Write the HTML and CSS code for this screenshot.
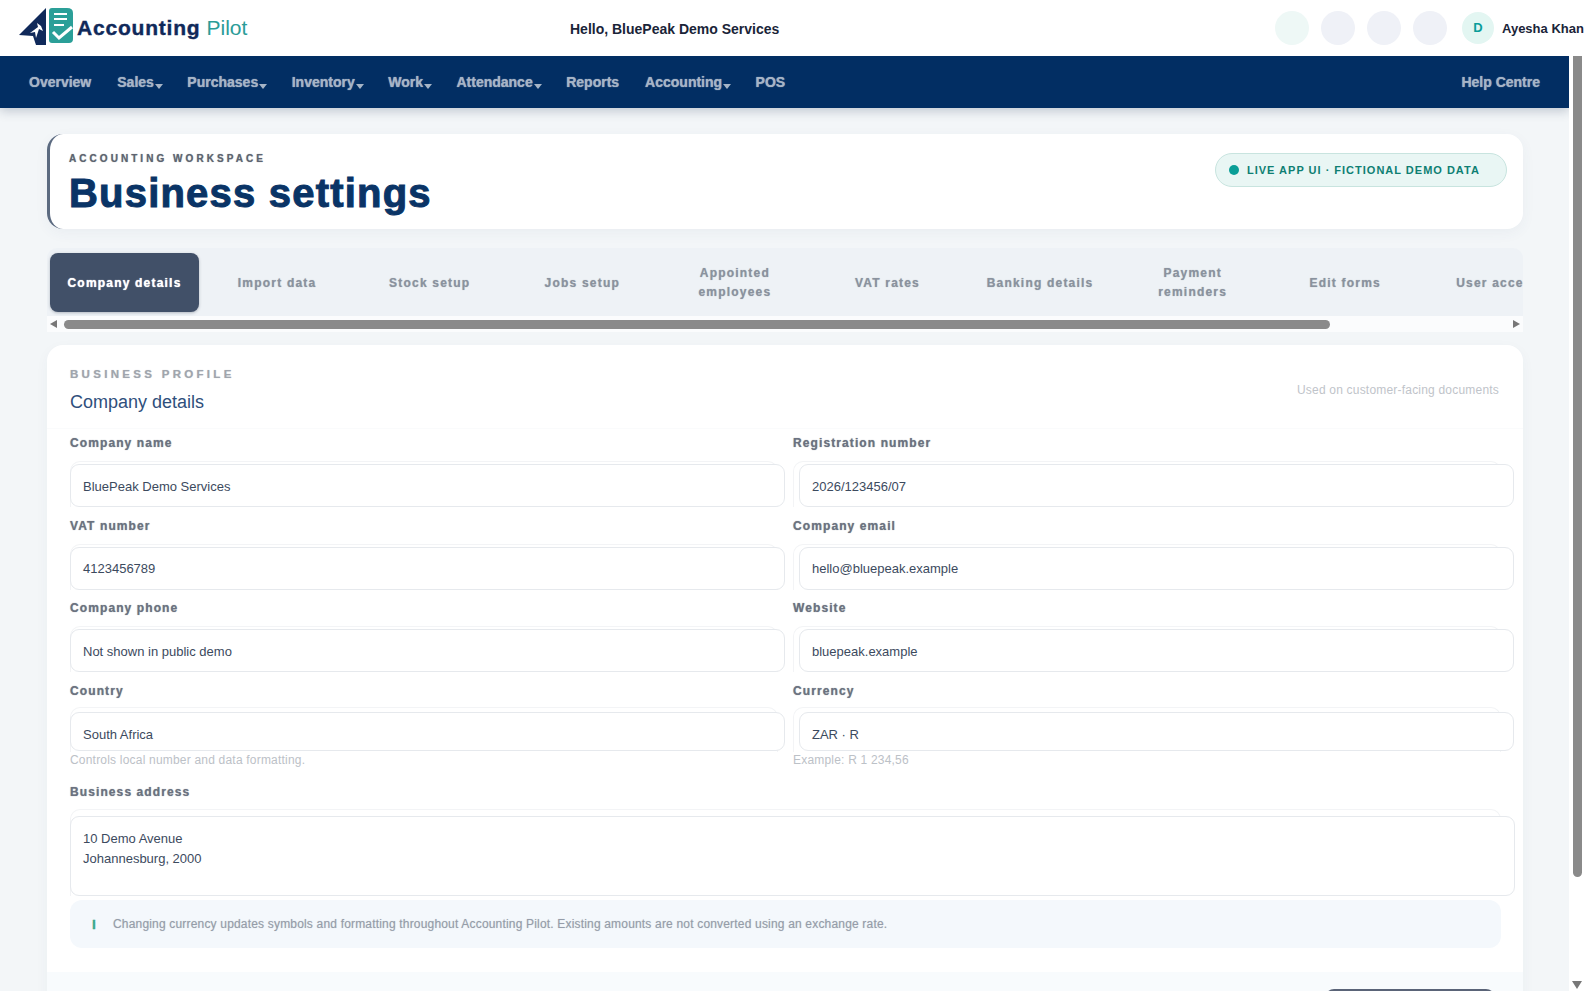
FILE: index.html
```html
<!DOCTYPE html>
<html lang="en">
	<head>
		<title>Business settings</title>
		<meta charset="UTF-8">
		<meta content="width=device-width,initial-scale=1.0" name="viewport">
		<link rel="stylesheet" href="styles.css">
	</head>
	<body>
		<div class="app">
			<header class="topbar">
				<div class="brand">
					<svg class="brandMark" width="54" height="38" viewBox="0 0 54 38">
						<path d="M27 0 L27 37 L17 37 L14 28 L0 27 Z" fill="#10295a"/>
						<path d="M11 25 L19 19 L18 15 L22 18 L24 23 L20 21 L17 30 L16 24 Z" fill="#fff"/>
						<path d="M30 3 Q30 0 33 0 L48 0 Q54 0 54 5 L54 31 Q54 35 50 35 L33 35 Q30 35 30 32 Z" fill="#2b9f98"/>
						<path d="M35 6 H48 M35 11 H48 M35 17 H45" stroke="#fff" stroke-width="2" fill="none"/>
						<path d="M34 24 L40 30 L53 19" stroke="#fff" stroke-width="3" fill="none"/>
					</svg>
					<span class="brandName">Accounting</span><span class="brandPilot">Pilot</span>
				</div>
				<div class="hello">Hello, BluePeak Demo Services</div>
				<div class="topIcons">
					<span class="roundBtn mint"></span>
					<span class="roundBtn"></span>
					<span class="roundBtn"></span>
					<span class="roundBtn"></span>
					<span class="avatar">D</span>
					<span class="userName">Ayesha Khan</span>
				</div>
			</header>
			<div class="workArea">
				<div class="scroller">
					<nav class="mainNav">
						<a class="navItem">Overview</a>
						<a class="navItem drop">Sales</a>
						<a class="navItem drop">Purchases</a>
						<a class="navItem drop">Inventory</a>
						<a class="navItem drop">Work</a>
						<a class="navItem drop">Attendance</a>
						<a class="navItem">Reports</a>
						<a class="navItem drop">Accounting</a>
						<a class="navItem">POS</a>
						<a class="navItem help">Help Centre</a>
					</nav>
					<main class="page">
						<section class="hero">
							<div>
								<div class="eyebrow">ACCOUNTING WORKSPACE</div>
								<h1 class="pageTitle">Business settings</h1>
							</div>
							<div class="liveBadge"><span class="liveDot"></span>LIVE APP UI · FICTIONAL DEMO DATA</div>
						</section>
						<div class="tabsWrap">
							<div class="tabs">
								<a class="tab active">Company details</a>
								<a class="tab">Import data</a>
								<a class="tab">Stock setup</a>
								<a class="tab">Jobs setup</a>
								<a class="tab">Appointed employees</a>
								<a class="tab">VAT rates</a>
								<a class="tab">Banking details</a>
								<a class="tab">Payment reminders</a>
								<a class="tab">Edit forms</a>
								<a class="tab">User access</a>
							</div>
							<div class="tabsBar">
								<span class="arrowLeft"></span>
								<span class="tabsThumb"></span>
								<span class="arrowRight"></span>
							</div>
						</div>
						<section class="card">
							<div class="cardHead">
								<div>
									<div class="cardEyebrow">BUSINESS PROFILE</div>
									<h2 class="cardTitle">Company details</h2>
								</div>
								<div class="cardNote">Used on customer-facing documents</div>
							</div>
							<div class="formGrid">
								<div class="field">
									<label class="fieldLabel">Company name</label>
									<div class="ghost"><div class="input">BluePeak Demo Services</div></div>
								</div>
								<div class="field shifted">
									<label class="fieldLabel">Registration number</label>
									<div class="ghost"><div class="input">2026/123456/07</div></div>
								</div>
								<div class="field">
									<label class="fieldLabel">VAT number</label>
									<div class="ghost"><div class="input">4123456789</div></div>
								</div>
								<div class="field shifted">
									<label class="fieldLabel">Company email</label>
									<div class="ghost"><div class="input">hello@bluepeak.example</div></div>
								</div>
								<div class="field">
									<label class="fieldLabel">Company phone</label>
									<div class="ghost"><div class="input">Not shown in public demo</div></div>
								</div>
								<div class="field shifted">
									<label class="fieldLabel">Website</label>
									<div class="ghost"><div class="input">bluepeak.example</div></div>
								</div>
								<div class="field short">
									<label class="fieldLabel">Country</label>
									<div class="ghost"><div class="input">South Africa</div></div>
									<div class="hint">Controls local number and data formatting.</div>
								</div>
								<div class="field short shifted">
									<label class="fieldLabel">Currency</label>
									<div class="ghost"><div class="input">ZAR · R</div></div>
									<div class="hint">Example: R 1 234,56</div>
								</div>
								<div class="field wide">
									<label class="fieldLabel">Business address</label>
									<div class="ghost"><div class="input area">10 Demo Avenue<br>Johannesburg, 2000</div></div>
								</div>
							</div>
							<div class="infoBox">
								<span class="infoIcon">i</span>
								Changing currency updates symbols and formatting throughout Accounting Pilot. Existing amounts are not converted using an exchange rate.
							</div>
							<div class="cardFoot">
								<a class="saveBtn"></a>
							</div>
						</section>
					</main>
				</div>
				<div class="rail">
					<span class="railThumb"></span>
					<span class="arrowDown"></span>
				</div>
			</div>
		</div>
	</body>
</html>
```

FILE: styles.css
```css
html,body{margin:0;height:100%;overflow:hidden;}
body{font-family:"Liberation Sans",Arial,sans-serif;color:#1a2438;}
a{display:block;}
h1,h2{margin:0;}

.app{height:100vh;display:flex;flex-direction:column;}

.topbar{height:56px;flex:none;background:#fff;display:flex;align-items:center;overflow:hidden;position:relative;z-index:2;}
.brand{width:570px;flex:none;display:flex;align-items:center;padding-left:19px;box-sizing:border-box;}
.brandMark{margin-right:4px;margin-top:-2px;}
.brandName{font-size:21px;font-weight:bold;letter-spacing:.8px;color:#10295a;margin-right:6px;-webkit-text-stroke:.4px #10295a;}
.brandPilot{font-size:21px;color:#2b9c98;}
.hello{font-size:14px;font-weight:bold;color:#1a2438;width:722px;flex:none;margin-top:2px;}
.topIcons{display:flex;align-items:center;flex:none;white-space:nowrap;margin-left:-17px;}
.roundBtn{width:34px;height:34px;border-radius:50%;background:#eff1f7;margin-right:12px;}
.roundBtn.mint{background:#eef8f6;}
.avatar{width:32px;height:32px;border-radius:50%;background:#e3f6f2;color:#0a9d9a;font-size:13px;font-weight:bold;text-align:center;line-height:32px;margin-left:3px;margin-right:8px;}
.userName{font-size:13px;font-weight:bold;color:#1a2438;}

.workArea{flex:1;min-height:0;display:flex;}
.scroller{flex:1;min-width:0;overflow:hidden;background:#f3f6f8;}

/* the page scrollbar, drawn */
.rail{width:16px;flex:none;background:#fff;display:flex;flex-direction:column;align-items:center;}
.railThumb{width:9px;height:821px;background:#8a8a8a;border-radius:0 0 5px 5px;}
.arrowDown{margin-top:auto;margin-bottom:2px;border:5px solid transparent;border-top:8px solid #777;border-bottom:0;}

.mainNav{height:52px;background:#022e63;display:flex;align-items:center;padding:0 29px;box-shadow:0 3px 10px rgba(40,60,90,.25);position:relative;}
.navItem{font-size:14px;font-weight:bold;color:#a6b4c6;margin-right:26px;white-space:nowrap;text-shadow:0 0 1px #a6b4c6;}
.navItem.drop{margin-right:24.500px;}
.navItem.drop:after{content:"";display:inline-block;border:4px solid transparent;border-top:5px solid #a6b4c6;border-bottom:0;margin-left:1px;vertical-align:-2px;}
.navItem.help{margin-left:auto;margin-right:0;}

.page{padding:26px 46px 53px 47px;}

.hero{height:95px;box-sizing:border-box;background:#fff;border-left:3px solid #5b6a80;border-radius:16px;display:flex;justify-content:space-between;padding:18px 16px 0 19px;box-shadow:0 4px 14px rgba(60,80,110,.05);}
.eyebrow{font-size:10px;font-weight:bold;letter-spacing:3.050px;color:#5d6470;line-height:13px;text-shadow:0 0 1px #8d939c;}
.pageTitle{font-size:40px;font-weight:bold;color:#0a3466;line-height:42px;margin-top:7px;letter-spacing:1.200px;-webkit-text-stroke:1px #0a3466;}
.liveBadge{height:34px;box-sizing:border-box;width:292px;margin-top:1px;background:#e9f6f4;border:1px solid #c8e4df;border-radius:17px;display:flex;align-items:center;font-size:11px;font-weight:bold;letter-spacing:1px;color:#0e7f73;padding-left:13px;}
.liveDot{width:10px;height:10px;border-radius:50%;background:#0a9e97;margin-right:8px;}

.tabsWrap{margin-top:19px;border-radius:10px 10px 0 0;overflow:hidden;}
.tabs{height:68px;box-sizing:border-box;display:flex;gap:3.600px;overflow:hidden;padding:5px 3px 4px;background:#eef2f6;}
.tab{flex:0 0 149px;height:59px;box-sizing:border-box;display:flex;align-items:center;justify-content:center;text-align:center;padding:1px 20px 0;font-size:12px;line-height:19px;font-weight:bold;letter-spacing:1.200px;color:#8a929e;border-radius:8px;text-shadow:0 0 1px #a6acb5;}
.tab.active{background:#415068;color:#fff;padding:1px 0 0;box-shadow:0 1px 3px rgba(40,50,70,.3);text-shadow:0 0 1px #fff;}

/* scrollbar under the tabs, drawn */
.tabsBar{height:16px;background:#fbfcfd;display:flex;align-items:center;padding:0 3px;}
.tabsThumb{width:1266px;height:9px;background:#8a8a8a;border-radius:5px;margin-left:7px;}
.arrowLeft{border:4px solid transparent;border-right:7px solid #777;border-left:0;}
.arrowRight{margin-left:auto;border:4px solid transparent;border-left:7px solid #777;border-right:0;}

.card{margin-top:13px;background:#fff;border-radius:16px;box-shadow:0 4px 14px rgba(60,80,110,.04);overflow:hidden;}
.cardHead{display:flex;justify-content:space-between;align-items:center;height:84px;box-sizing:border-box;padding:6px 24px 0 23px;border-bottom:1px solid #fafbfc;}
.cardEyebrow{font-size:11.500px;font-weight:bold;letter-spacing:3.300px;color:#a0a5ad;line-height:14px;text-shadow:0 0 1px #c3c6cb;}
.cardTitle{font-size:18px;font-weight:normal;color:#2f4f7c;line-height:22px;margin-top:10px;}
.cardNote{font-size:12px;letter-spacing:.2px;color:#bfc4ca;}

.formGrid{display:grid;grid-template-columns:708px 708px;column-gap:15px;row-gap:10.500px;padding:6px 22px 0 23px;}
.field{min-width:0;}
.fieldLabel{display:block;font-size:12px;line-height:16px;font-weight:bold;letter-spacing:1.100px;color:#6b7280;margin-bottom:10px;text-shadow:0 0 1px #8b919b;}
.ghost{border:1px solid #f3f4f6;border-bottom:0;border-radius:10px 10px 0 0;height:46px;box-sizing:border-box;}
.input{height:43px;box-sizing:border-box;width:715px;margin:2px 0 0 -1px;background:#fff;border:1px solid #e6e9ed;border-radius:9px;padding:1px 12px 0;display:flex;align-items:center;font-size:13px;color:#3c4a5e;position:relative;}
.shifted .input{margin-left:5px;}
.short .fieldLabel{margin-bottom:8px;}
.short .ghost{height:45px;}
.short .input{height:39px;margin-top:4px;padding-top:6px;}
.hint{font-size:12px;letter-spacing:.2px;line-height:14px;color:#bcc1c7;margin-top:1px;}
.wide{grid-column:1 / 3;margin-top:7px;}
.wide .fieldLabel{margin-bottom:9px;}
.wide .ghost{height:87px;width:1431px;}
.wide .input{display:block;width:1445px;height:80px;margin-top:6px;padding:12px 12px;line-height:20px;}

.infoBox{margin:4px 22px 0 23px;height:48px;box-sizing:border-box;background:#f4f8fc;border-radius:12px;display:flex;align-items:center;font-size:12px;letter-spacing:.18px;color:#959da9;padding:0 0 1px 17px;text-shadow:0 0 1px #c6cbd2;}
.infoIcon{width:14px;height:14px;margin-right:12px;font-size:12px;font-weight:bold;color:#3aa98f;text-align:center;line-height:16px;-webkit-text-stroke:.6px #3aa98f;}

.cardFoot{margin-top:24px;background:#f8fbfd;padding:17px 28px 17px 0;display:flex;justify-content:flex-end;}
.saveBtn{width:170px;height:44px;background:#5a6478;border-radius:9px;}
```
